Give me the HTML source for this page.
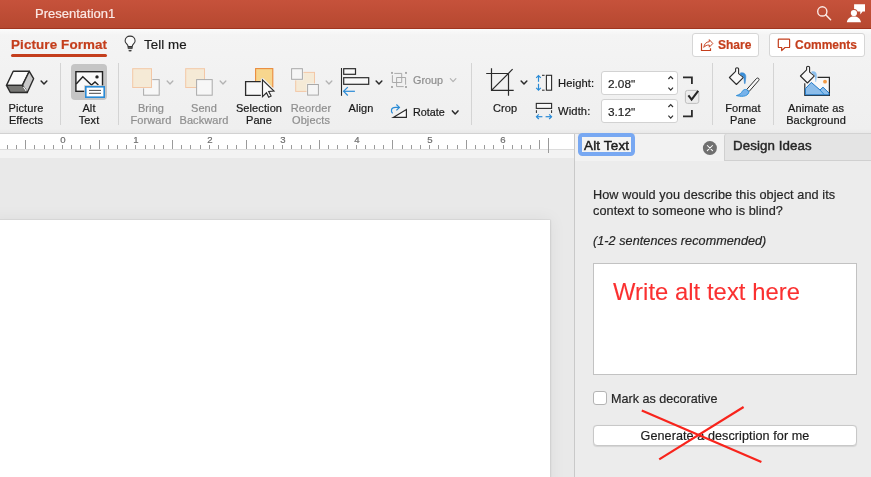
<!DOCTYPE html>
<html><head><meta charset="utf-8">
<style>
html,body{margin:0;padding:0;}
body{width:871px;height:477px;overflow:hidden;position:relative;background:#f1f1f1;font-family:"Liberation Sans", sans-serif;}
.t{position:absolute;white-space:nowrap;line-height:1;will-change:transform;-webkit-text-stroke:0.2px currentColor;}
.a{position:absolute;box-sizing:border-box;}
svg.ov{position:absolute;left:0;top:0;}
</style></head><body>
<div class="a" style="left:0;top:0;width:871px;height:29px;background:linear-gradient(#c6523b,#b64830);border-bottom:1px solid #a0351f;"></div>
<div class="a" style="left:0;top:29px;width:871px;height:104px;background:linear-gradient(#fbfbfb 0px,#f4f4f4 6px,#f1f1f1 60px,#efefef 100px,#e9e9e9 104px);"></div>
<div class="a" style="left:11px;top:54px;width:96px;height:3px;border-radius:2px;background:#c43e1c;"></div>
<div class="a" style="left:692px;top:33px;width:67px;height:24px;border-radius:3px;background:#fff;border:1px solid #d6d6d6;"></div>
<div class="a" style="left:769px;top:33px;width:96px;height:24px;border-radius:3px;background:#fff;border:1px solid #d6d6d6;"></div>
<div class="a" style="left:71px;top:64px;width:36px;height:36px;border-radius:4px;background:#c5c5c5;"></div>
<div class="a" style="left:601px;top:71px;width:77px;height:24px;border-radius:3px;background:#fff;border:1px solid #d2d2d2;"></div>
<div class="a" style="left:601px;top:99px;width:77px;height:24px;border-radius:3px;background:#fff;border:1px solid #d2d2d2;"></div>
<!-- separators -->
<div class="a" style="left:60px;top:63px;width:1px;height:62px;background:#d4d4d4;"></div>
<div class="a" style="left:118px;top:63px;width:1px;height:62px;background:#d4d4d4;"></div>
<div class="a" style="left:471px;top:63px;width:1px;height:62px;background:#d4d4d4;"></div>
<div class="a" style="left:712px;top:63px;width:1px;height:62px;background:#d4d4d4;"></div>
<div class="a" style="left:773px;top:63px;width:1px;height:62px;background:#d4d4d4;"></div>
<!-- ribbon bottom -->
<div class="a" style="left:0;top:133px;width:871px;height:1px;background:#d2d2d2;"></div>
<!-- ruler -->
<div class="a" style="left:0;top:134px;width:574px;height:16px;background:#fff;border-bottom:1px solid #dcdcdc;"></div>
<div class="a" style="left:0;top:150px;width:574px;height:8px;background:#f3f3f3;"></div>
<div class="a" style="left:0;top:158px;width:574px;height:319px;background:#e9e9e9;"></div>
<div class="a" style="left:-10px;top:220px;width:560px;height:270px;background:#fff;box-shadow:0 0 0 0.6px rgba(0,0,0,0.06),0 0 2px 0.5px rgba(0,0,0,0.05),0 0 16px 1px rgba(0,0,0,0.06);"></div>
<!-- panel -->
<div class="a" style="left:574px;top:134px;width:1px;height:343px;background:#c9c9c9;"></div>
<div class="a" style="left:575px;top:134px;width:296px;height:343px;background:#ececec;"></div>
<div class="a" style="left:575px;top:134px;width:149px;height:27px;background:#f2f2f2;"></div>
<div class="a" style="left:724px;top:134px;width:147px;height:27px;background:#e4e4e4;border-left:1px solid #d0d0d0;border-bottom:1px solid #d0d0d0;border-top-left-radius:3px;"></div>
<div class="a" style="left:578.2px;top:133.3px;width:56.6px;height:22.4px;border-radius:4.5px;background:#78a8f2;"></div>
<div class="a" style="left:582.2px;top:137px;width:48.6px;height:15px;background:#f4f4f4;"></div>
<div class="a" style="left:593px;top:263px;width:264px;height:112px;background:#fff;border:1px solid #c2c2c2;"></div>
<div class="a" style="left:593px;top:391px;width:14px;height:14px;border-radius:3px;background:#fff;border:1px solid #b4b4b4;"></div>
<div class="a" style="left:593px;top:425px;width:264px;height:21px;border-radius:4px;background:#fff;border:1px solid #c8c8c8;box-shadow:0 0.5px 1px rgba(0,0,0,0.1);"></div>
<span class="t" style="left:34.5px;top:7.00px;font-size:13px;color:#fbe9e5;">Presentation1</span><span class="t" style="left:11.2px;top:37.96px;font-size:13.4px;color:#c43e1c;font-weight:700;letter-spacing:0.12px;">Picture Format</span><span class="t" style="left:143.9px;top:37.94px;font-size:13.3px;color:#1c1c1c;letter-spacing:0.08px;">Tell me</span><span class="t" style="left:718.2px;top:39.14px;font-size:12px;color:#c43e1c;font-weight:700;">Share</span><span class="t" style="left:795.4px;top:39.14px;font-size:12px;color:#c43e1c;font-weight:700;">Comments</span><span class="t" style="left:26px;top:102.69px;font-size:11px;color:#181818;letter-spacing:0.1px;transform:translateX(-50%);">Picture</span><span class="t" style="left:26px;top:114.69px;font-size:11px;color:#181818;letter-spacing:0.1px;transform:translateX(-50%);">Effects</span><span class="t" style="left:88.8px;top:102.69px;font-size:11px;color:#181818;letter-spacing:0.1px;transform:translateX(-50%);">Alt</span><span class="t" style="left:88.8px;top:114.69px;font-size:11px;color:#181818;letter-spacing:0.1px;transform:translateX(-50%);">Text</span><span class="t" style="left:151.4px;top:102.69px;font-size:11px;color:#8e8e8e;letter-spacing:0.1px;transform:translateX(-50%);">Bring</span><span class="t" style="left:151.4px;top:114.69px;font-size:11px;color:#8e8e8e;letter-spacing:0.1px;transform:translateX(-50%);">Forward</span><span class="t" style="left:204.3px;top:102.69px;font-size:11px;color:#8e8e8e;letter-spacing:0.1px;transform:translateX(-50%);">Send</span><span class="t" style="left:204.3px;top:114.69px;font-size:11px;color:#8e8e8e;letter-spacing:0.1px;transform:translateX(-50%);">Backward</span><span class="t" style="left:259.3px;top:102.69px;font-size:11px;color:#181818;letter-spacing:0.1px;transform:translateX(-50%);">Selection</span><span class="t" style="left:259.3px;top:114.69px;font-size:11px;color:#181818;letter-spacing:0.1px;transform:translateX(-50%);">Pane</span><span class="t" style="left:310.9px;top:102.69px;font-size:11px;color:#8e8e8e;letter-spacing:0.1px;transform:translateX(-50%);">Reorder</span><span class="t" style="left:310.9px;top:114.69px;font-size:11px;color:#8e8e8e;letter-spacing:0.1px;transform:translateX(-50%);">Objects</span><span class="t" style="left:360.7px;top:102.69px;font-size:11px;color:#181818;letter-spacing:0.1px;transform:translateX(-50%);">Align</span><span class="t" style="left:505.4px;top:102.69px;font-size:11px;color:#181818;letter-spacing:0.1px;transform:translateX(-50%);">Crop</span><span class="t" style="left:743px;top:102.69px;font-size:11px;color:#181818;letter-spacing:0.1px;transform:translateX(-50%);">Format</span><span class="t" style="left:743px;top:114.69px;font-size:11px;color:#181818;letter-spacing:0.1px;transform:translateX(-50%);">Pane</span><span class="t" style="left:816px;top:102.69px;font-size:11px;color:#181818;letter-spacing:0.1px;transform:translateX(-50%);">Animate as</span><span class="t" style="left:816px;top:114.69px;font-size:11px;color:#181818;letter-spacing:0.1px;transform:translateX(-50%);">Background</span><span class="t" style="left:413.4px;top:75.06px;font-size:10.8px;color:#8e8e8e;">Group</span><span class="t" style="left:413.4px;top:106.66px;font-size:10.8px;color:#181818;">Rotate</span><span class="t" style="left:558.2px;top:77.72px;font-size:11.2px;color:#181818;letter-spacing:0.12px;">Height:</span><span class="t" style="left:558.2px;top:105.72px;font-size:11.2px;color:#181818;letter-spacing:0.12px;">Width:</span><span class="t" style="left:608.2px;top:78.71px;font-size:11.8px;color:#1f1f1f;">2.08"</span><span class="t" style="left:608.2px;top:106.81px;font-size:11.8px;color:#1f1f1f;">3.12"</span><span class="t" style="left:62.9px;top:134.87px;font-size:9.6px;color:#6e6e6e;transform:translateX(-50%);">0</span><span class="t" style="left:136.33px;top:134.87px;font-size:9.6px;color:#6e6e6e;transform:translateX(-50%);">1</span><span class="t" style="left:209.76000000000002px;top:134.87px;font-size:9.6px;color:#6e6e6e;transform:translateX(-50%);">2</span><span class="t" style="left:283.19px;top:134.87px;font-size:9.6px;color:#6e6e6e;transform:translateX(-50%);">3</span><span class="t" style="left:356.62px;top:134.87px;font-size:9.6px;color:#6e6e6e;transform:translateX(-50%);">4</span><span class="t" style="left:430.05px;top:134.87px;font-size:9.6px;color:#6e6e6e;transform:translateX(-50%);">5</span><span class="t" style="left:503.48px;top:134.87px;font-size:9.6px;color:#6e6e6e;transform:translateX(-50%);">6</span><span class="t" style="left:583.6px;top:138.57px;font-size:13.5px;color:#1c1c1c;letter-spacing:0.15px;-webkit-text-stroke:0.45px #1c1c1c;">Alt Text</span><span class="t" style="left:733.4px;top:139.14px;font-size:13.3px;color:#262626;letter-spacing:0.1px;-webkit-text-stroke:0.45px #262626;">Design Ideas</span><span class="t" style="left:593.2px;top:189.25px;font-size:12.7px;color:#262626;letter-spacing:0.075px;">How would you describe this object and its</span><span class="t" style="left:593.2px;top:205.25px;font-size:12.7px;color:#262626;letter-spacing:0.075px;">context to someone who is blind?</span><span class="t" style="left:593.2px;top:234.63px;font-size:12.6px;color:#262626;font-style:italic;letter-spacing:0.07px;">(1-2 sentences recommended)</span><span class="t" style="left:613.2px;top:280.15px;font-size:23.8px;color:#fa3030;letter-spacing:0.05px;-webkit-text-stroke:0.1px #fa3030;">Write alt text here</span><span class="t" style="left:611.2px;top:392.53px;font-size:12.6px;color:#262626;">Mark as decorative</span><span class="t" style="left:725px;top:429.73px;font-size:12.6px;color:#1c1c1c;letter-spacing:0.08px;transform:translateX(-50%);">Generate a description for me</span>
<svg class="ov" width="871" height="477" viewBox="0 0 871 477">
<line x1="7.5" y1="145" x2="7.5" y2="149" stroke="#9a9a9a" stroke-width="1"/>
<line x1="16.5" y1="145" x2="16.5" y2="149" stroke="#9a9a9a" stroke-width="1"/>
<line x1="25.5" y1="140" x2="25.5" y2="149" stroke="#9a9a9a" stroke-width="1"/>
<line x1="34.5" y1="145" x2="34.5" y2="149" stroke="#9a9a9a" stroke-width="1"/>
<line x1="44.5" y1="145" x2="44.5" y2="149" stroke="#9a9a9a" stroke-width="1"/>
<line x1="53.5" y1="145" x2="53.5" y2="149" stroke="#9a9a9a" stroke-width="1"/>
<line x1="62.5" y1="145" x2="62.5" y2="149" stroke="#9a9a9a" stroke-width="1"/>
<line x1="71.5" y1="145" x2="71.5" y2="149" stroke="#9a9a9a" stroke-width="1"/>
<line x1="80.5" y1="145" x2="80.5" y2="149" stroke="#9a9a9a" stroke-width="1"/>
<line x1="90.5" y1="145" x2="90.5" y2="149" stroke="#9a9a9a" stroke-width="1"/>
<line x1="99.5" y1="140" x2="99.5" y2="149" stroke="#9a9a9a" stroke-width="1"/>
<line x1="108.5" y1="145" x2="108.5" y2="149" stroke="#9a9a9a" stroke-width="1"/>
<line x1="117.5" y1="145" x2="117.5" y2="149" stroke="#9a9a9a" stroke-width="1"/>
<line x1="126.5" y1="145" x2="126.5" y2="149" stroke="#9a9a9a" stroke-width="1"/>
<line x1="135.5" y1="145" x2="135.5" y2="149" stroke="#9a9a9a" stroke-width="1"/>
<line x1="145.5" y1="145" x2="145.5" y2="149" stroke="#9a9a9a" stroke-width="1"/>
<line x1="154.5" y1="145" x2="154.5" y2="149" stroke="#9a9a9a" stroke-width="1"/>
<line x1="163.5" y1="145" x2="163.5" y2="149" stroke="#9a9a9a" stroke-width="1"/>
<line x1="172.5" y1="140" x2="172.5" y2="149" stroke="#9a9a9a" stroke-width="1"/>
<line x1="181.5" y1="145" x2="181.5" y2="149" stroke="#9a9a9a" stroke-width="1"/>
<line x1="190.5" y1="145" x2="190.5" y2="149" stroke="#9a9a9a" stroke-width="1"/>
<line x1="200.5" y1="145" x2="200.5" y2="149" stroke="#9a9a9a" stroke-width="1"/>
<line x1="209.5" y1="145" x2="209.5" y2="149" stroke="#9a9a9a" stroke-width="1"/>
<line x1="218.5" y1="145" x2="218.5" y2="149" stroke="#9a9a9a" stroke-width="1"/>
<line x1="227.5" y1="145" x2="227.5" y2="149" stroke="#9a9a9a" stroke-width="1"/>
<line x1="236.5" y1="145" x2="236.5" y2="149" stroke="#9a9a9a" stroke-width="1"/>
<line x1="246.5" y1="140" x2="246.5" y2="149" stroke="#9a9a9a" stroke-width="1"/>
<line x1="255.5" y1="145" x2="255.5" y2="149" stroke="#9a9a9a" stroke-width="1"/>
<line x1="264.5" y1="145" x2="264.5" y2="149" stroke="#9a9a9a" stroke-width="1"/>
<line x1="273.5" y1="145" x2="273.5" y2="149" stroke="#9a9a9a" stroke-width="1"/>
<line x1="282.5" y1="145" x2="282.5" y2="149" stroke="#9a9a9a" stroke-width="1"/>
<line x1="291.5" y1="145" x2="291.5" y2="149" stroke="#9a9a9a" stroke-width="1"/>
<line x1="301.5" y1="145" x2="301.5" y2="149" stroke="#9a9a9a" stroke-width="1"/>
<line x1="310.5" y1="145" x2="310.5" y2="149" stroke="#9a9a9a" stroke-width="1"/>
<line x1="319.5" y1="140" x2="319.5" y2="149" stroke="#9a9a9a" stroke-width="1"/>
<line x1="328.5" y1="145" x2="328.5" y2="149" stroke="#9a9a9a" stroke-width="1"/>
<line x1="337.5" y1="145" x2="337.5" y2="149" stroke="#9a9a9a" stroke-width="1"/>
<line x1="347.5" y1="145" x2="347.5" y2="149" stroke="#9a9a9a" stroke-width="1"/>
<line x1="356.5" y1="145" x2="356.5" y2="149" stroke="#9a9a9a" stroke-width="1"/>
<line x1="365.5" y1="145" x2="365.5" y2="149" stroke="#9a9a9a" stroke-width="1"/>
<line x1="374.5" y1="145" x2="374.5" y2="149" stroke="#9a9a9a" stroke-width="1"/>
<line x1="383.5" y1="145" x2="383.5" y2="149" stroke="#9a9a9a" stroke-width="1"/>
<line x1="392.5" y1="140" x2="392.5" y2="149" stroke="#9a9a9a" stroke-width="1"/>
<line x1="402.5" y1="145" x2="402.5" y2="149" stroke="#9a9a9a" stroke-width="1"/>
<line x1="411.5" y1="145" x2="411.5" y2="149" stroke="#9a9a9a" stroke-width="1"/>
<line x1="420.5" y1="145" x2="420.5" y2="149" stroke="#9a9a9a" stroke-width="1"/>
<line x1="429.5" y1="145" x2="429.5" y2="149" stroke="#9a9a9a" stroke-width="1"/>
<line x1="438.5" y1="145" x2="438.5" y2="149" stroke="#9a9a9a" stroke-width="1"/>
<line x1="447.5" y1="145" x2="447.5" y2="149" stroke="#9a9a9a" stroke-width="1"/>
<line x1="457.5" y1="145" x2="457.5" y2="149" stroke="#9a9a9a" stroke-width="1"/>
<line x1="466.5" y1="140" x2="466.5" y2="149" stroke="#9a9a9a" stroke-width="1"/>
<line x1="475.5" y1="145" x2="475.5" y2="149" stroke="#9a9a9a" stroke-width="1"/>
<line x1="484.5" y1="145" x2="484.5" y2="149" stroke="#9a9a9a" stroke-width="1"/>
<line x1="493.5" y1="145" x2="493.5" y2="149" stroke="#9a9a9a" stroke-width="1"/>
<line x1="503.5" y1="145" x2="503.5" y2="149" stroke="#9a9a9a" stroke-width="1"/>
<line x1="512.5" y1="145" x2="512.5" y2="149" stroke="#9a9a9a" stroke-width="1"/>
<line x1="521.5" y1="145" x2="521.5" y2="149" stroke="#9a9a9a" stroke-width="1"/>
<line x1="530.5" y1="145" x2="530.5" y2="149" stroke="#9a9a9a" stroke-width="1"/>
<line x1="539.5" y1="140" x2="539.5" y2="149" stroke="#9a9a9a" stroke-width="1"/>
<line x1="548.5" y1="138" x2="548.5" y2="153" stroke="#9a9a9a" stroke-width="1"/>
<circle cx="822.3" cy="11.4" r="4.6" fill="none" stroke="#fbeae6" stroke-width="1.4"/>
<line x1="825.7" y1="14.8" x2="830.6" y2="19.7" stroke="#fbeae6" stroke-width="1.5" stroke-linecap="round"/>
<path d="M854.1,4.2 H865 V11.6 H862.6 L860.3,14.4 V11.6 H854.1 Z" fill="#fff"/>
<circle cx="853.9" cy="13" r="3.9" fill="#bf4c35"/>
<circle cx="853.9" cy="13" r="3.1" fill="#fff"/>
<path d="M846.8,22.2 C847.5,18.3 850.3,16.4 853.9,16.4 C857.5,16.4 860.3,18.3 861,22.2 Z" fill="#fff"/>
<path d="M128.1,46.4 C128.1,44.4 125.1,43.3 125.1,40.9 C125.1,38.1 127.3,36.1 130.1,36.1 C132.9,36.1 135.1,38.1 135.1,40.9 C135.1,43.3 132.2,44.4 132.2,46.4 Z" fill="#fafafa" stroke="#333" stroke-width="1.05" stroke-linejoin="round"/>
<path d="M128.1,46.4 V48.6 H132.2 V46.4 M128.1,47.6 H132.2" fill="none" stroke="#333" stroke-width="0.9"/>
<ellipse cx="130.1" cy="50.7" rx="1.7" ry="0.7" fill="#333"/>
<path d="M701.5,43.2 V50.5 H710.5 V48.2" fill="none" stroke="#c43e1c" stroke-width="1.2" stroke-linejoin="miter"/>
<path d="M703.8,47.4 C704.2,43.8 706.2,42 709.3,41.7 L709.3,39.6 L712.8,43.5 L709.3,47.2 L709.3,45 C706.8,45 705,45.8 703.8,47.4 Z" fill="none" stroke="#c43e1c" stroke-width="0.95" stroke-linejoin="round"/>
<path d="M778.9,39.1 H789 Q789.6,39.1 789.6,39.7 V46.9 Q789.6,47.5 789,47.5 H785 L781.7,50.6 V47.5 H778.9 Q778.3,47.5 778.3,46.9 V39.7 Q778.3,39.1 778.9,39.1 Z" fill="none" stroke="#c43e1c" stroke-width="1.2" stroke-linejoin="round"/>
<polygon points="13.2,71.3 29.3,71.3 22.4,85.4 6.5,85.4" fill="#fafafa" stroke="#2b2b2b" stroke-width="1.4" stroke-linejoin="round"/>
<polygon points="29.3,71.3 33.6,78.7 27.3,92.5 22.4,85.4" fill="#c9c9c9" stroke="#2b2b2b" stroke-width="1.4" stroke-linejoin="round"/>
<polygon points="6.5,85.4 22.4,85.4 27.3,92.5 10.3,92.5" fill="#777774" stroke="#2b2b2b" stroke-width="1.4" stroke-linejoin="round"/>
<line x1="23.4" y1="86.9" x2="26.4" y2="91.3" stroke="#fff" stroke-width="1.1"/>
<polyline points="41.15,81.0 44,84.0 46.85,81.0" fill="none" stroke="#2b2b2b" stroke-width="1.5" stroke-linecap="round" stroke-linejoin="round"/>
<rect x="75.9" y="71.7" width="26.6" height="19.6" fill="#fafafa" stroke="#222" stroke-width="1.4"/>
<polyline points="76.2,84 82.8,76.8 91.5,85 95,82 98.4,85" fill="none" stroke="#222" stroke-width="1.4" stroke-linejoin="miter"/>
<circle cx="97" cy="76.9" r="1.7" fill="#222"/>
<rect x="84.2" y="85.3" width="21.4" height="13.2" fill="#c5c5c5"/>
<rect x="85.8" y="86.8" width="18.4" height="10.4" fill="#fff" stroke="#2a8bd6" stroke-width="1.6"/>
<line x1="89" y1="90.4" x2="101" y2="90.4" stroke="#333" stroke-width="0.9"/>
<line x1="89" y1="93.3" x2="101" y2="93.3" stroke="#333" stroke-width="0.9"/>
<rect x="143.6" y="79.6" width="15.6" height="15.6" fill="#f7f7f7" stroke="#a9a9a9" stroke-width="1"/>
<rect x="131.7" y="67.7" width="20.6" height="20.6" fill="#f4f4f4"/>
<rect x="132.7" y="68.7" width="18.8" height="18.8" fill="#f5ead6" stroke="#f3c7a6" stroke-width="1"/>
<polyline points="167.15,81.0 170,84.0 172.85,81.0" fill="none" stroke="#b3b3b3" stroke-width="1.3" stroke-linecap="round" stroke-linejoin="round"/>
<rect x="185.7" y="68.7" width="18.8" height="18.8" fill="#f5ead6" stroke="#f3c7a6" stroke-width="1"/>
<rect x="196.6" y="79.6" width="15.6" height="15.6" fill="#f7f7f7" stroke="#a9a9a9" stroke-width="1"/>
<polyline points="220.15,81.0 223,84.0 225.85,81.0" fill="none" stroke="#b3b3b3" stroke-width="1.3" stroke-linecap="round" stroke-linejoin="round"/>
<rect x="255.6" y="68.6" width="17.2" height="18.6" fill="#f7d68e" stroke="#ea8a3c" stroke-width="1.1"/>
<rect x="245.6" y="81.7" width="16" height="13.6" fill="#f8f8f8"/>
<path d="M261.2,81.7 H245.6 V95.3 H261.2" fill="none" stroke="#2b2b2b" stroke-width="1.3"/>
<path d="M262.5,79.8 L274,91.1 L268.7,91.5 L271.1,96 L268.7,97.3 L266.5,92.8 L262.5,96.6 Z" fill="#f8f8f8" stroke="#f3f3f3" stroke-width="3.4" stroke-linejoin="round"/>
<path d="M262.5,79.8 L274,91.1 L268.7,91.5 L271.1,96 L268.7,97.3 L266.5,92.8 L262.5,96.6 Z" fill="#fafafa" stroke="#2b2b2b" stroke-width="1.15" stroke-linejoin="miter"/>
<rect x="295.7" y="72.4" width="18.8" height="19" fill="#f5ead6" stroke="#f3c7a6" stroke-width="1"/>
<rect x="290.6" y="67.7" width="12.8" height="12.6" fill="#f4f4f4"/>
<rect x="291.6" y="68.7" width="10.8" height="10.6" fill="#f5f5f5" stroke="#a9a9a9" stroke-width="1"/>
<rect x="306.6" y="83.5" width="12.8" height="12.6" fill="#f4f4f4"/>
<rect x="307.6" y="84.5" width="10.8" height="10.6" fill="#f5f5f5" stroke="#a9a9a9" stroke-width="1"/>
<polyline points="326.15,81.0 329,84.0 331.85,81.0" fill="none" stroke="#b3b3b3" stroke-width="1.3" stroke-linecap="round" stroke-linejoin="round"/>
<line x1="341.5" y1="68" x2="341.5" y2="95.8" stroke="#2b2b2b" stroke-width="1.1"/>
<rect x="343.7" y="68.7" width="11.8" height="5.6" fill="#f8f8f8" stroke="#2b2b2b" stroke-width="1.2"/>
<rect x="343.7" y="77.7" width="25" height="6.6" fill="#f8f8f8" stroke="#2b2b2b" stroke-width="1.2"/>
<line x1="343.6" y1="91.3" x2="354.9" y2="91.3" stroke="#2a8bd6" stroke-width="1.2"/>
<polyline points="347.8,87.1 343.6,91.3 347.8,95.5" fill="none" stroke="#2a8bd6" stroke-width="1.2"/>
<polyline points="376.15,81.0 379,84.0 381.85,81.0" fill="none" stroke="#2b2b2b" stroke-width="1.5" stroke-linecap="round" stroke-linejoin="round"/>
<rect x="391.05" y="71.95" width="1.9" height="1.9" fill="#a6a6a6"/>
<rect x="405.05" y="71.95" width="1.9" height="1.9" fill="#a6a6a6"/>
<rect x="391.05" y="86.05" width="1.9" height="1.9" fill="#a6a6a6"/>
<rect x="405.05" y="86.05" width="1.9" height="1.9" fill="#a6a6a6"/>
<path d="M394.3,73.4 H401.7 V82.5 H392.4 V75.2" fill="none" stroke="#a6a6a6" stroke-width="0.95"/>
<path d="M405.6,84.7 V77.5 H396.6 V86.6 H403.7" fill="none" stroke="#a6a6a6" stroke-width="0.95"/>
<polyline points="450.3,78.6 453.1,81.6 455.90000000000003,78.6" fill="none" stroke="#b3b3b3" stroke-width="1.2" stroke-linecap="round" stroke-linejoin="round"/>
<polygon points="393.2,117.4 406.4,109.6 406.4,117.4" fill="#fafafa" stroke="#2b2b2b" stroke-width="1.15" stroke-linejoin="miter"/>
<path d="M392.6,113.4 C390.8,111.6 390.6,107.4 395.4,107.4 L399.4,107.4" fill="none" stroke="#2a8bd6" stroke-width="1.2"/>
<polyline points="396.4,104.5 399.4,107.4 396.4,110.4" fill="none" stroke="#2a8bd6" stroke-width="1.2"/>
<polyline points="452.4,110.9 455.2,114.0 458.0,110.9" fill="none" stroke="#2b2b2b" stroke-width="1.5" stroke-linecap="round" stroke-linejoin="round"/>
<path d="M491.5,68.2 V90.4 H513.7 M486.2,73.5 H508.5 V95.7 M491.5,90.4 L512.6,69.2" fill="none" stroke="#2b2b2b" stroke-width="1.2"/>
<polyline points="521.15,81.0 524,84.0 526.85,81.0" fill="none" stroke="#2b2b2b" stroke-width="1.5" stroke-linecap="round" stroke-linejoin="round"/>
<line x1="538.5" y1="75.8" x2="538.5" y2="81.8" stroke="#2a8bd6" stroke-width="1.2"/>
<line x1="538.5" y1="83.8" x2="538.5" y2="89.8" stroke="#2a8bd6" stroke-width="1.2"/>
<polyline points="536.2,77.8 538.5,75.5 540.8,77.8" fill="none" stroke="#2a8bd6" stroke-width="1.2"/>
<polyline points="536.2,87.8 538.5,90.1 540.8,87.8" fill="none" stroke="#2a8bd6" stroke-width="1.2"/>
<line x1="542" y1="75.3" x2="544.6" y2="75.3" stroke="#2b2b2b" stroke-width="1"/>
<line x1="542" y1="90.2" x2="544.6" y2="90.2" stroke="#2b2b2b" stroke-width="1"/>
<rect x="546.4" y="75.3" width="5.2" height="14.9" fill="#f8f8f8" stroke="#2b2b2b" stroke-width="1.1"/>
<rect x="536.3" y="103.4" width="15.3" height="5" fill="#f8f8f8" stroke="#2b2b2b" stroke-width="1.1"/>
<line x1="536.4" y1="110.2" x2="536.4" y2="113" stroke="#2b2b2b" stroke-width="1"/>
<line x1="551.6" y1="110.2" x2="551.6" y2="113" stroke="#2b2b2b" stroke-width="1"/>
<line x1="536.6" y1="116.7" x2="542.4" y2="116.7" stroke="#2a8bd6" stroke-width="1.2"/>
<line x1="545.6" y1="116.7" x2="551.4" y2="116.7" stroke="#2a8bd6" stroke-width="1.2"/>
<polyline points="538.8,114.4 536.5,116.7 538.8,119" fill="none" stroke="#2a8bd6" stroke-width="1.2"/>
<polyline points="549.2,114.4 551.5,116.7 549.2,119" fill="none" stroke="#2a8bd6" stroke-width="1.2"/>
<polyline points="668.4,79.0 670.7,76.5 673,79.0" fill="none" stroke="#2e2e2e" stroke-width="1.15"/>
<polyline points="668.4,87.7 670.7,90.2 673,87.7" fill="none" stroke="#2e2e2e" stroke-width="1.15"/>
<polyline points="668.4,107.0 670.7,104.5 673,107.0" fill="none" stroke="#2e2e2e" stroke-width="1.15"/>
<polyline points="668.4,115.7 670.7,118.2 673,115.7" fill="none" stroke="#2e2e2e" stroke-width="1.15"/>
<polyline points="683,77.4 691.9,77.4 691.9,84" fill="none" stroke="#2b2b2b" stroke-width="1.8"/>
<polyline points="683,116.4 691.9,116.4 691.9,110" fill="none" stroke="#2b2b2b" stroke-width="1.8"/>
<rect x="685.4" y="90.4" width="13.4" height="13" rx="2.2" fill="#ececec" stroke="#b9b9b9" stroke-width="0.9"/>
<polyline points="688.4,95.4 691.6,99.6 698.2,90.8" fill="none" stroke="#262626" stroke-width="2.1" stroke-linejoin="miter"/>
<path d="M729.4,77.5 L735.6,71.3 L735.6,68.8 Q735.6,67.8 737,67.8 Q738.6,67.8 738.6,68.8 L738.6,73.6 L743.4,77.4 L736.4,84.5 Z" fill="#f8f8f8" stroke="#2b2b2b" stroke-width="1.1" stroke-linejoin="round"/>
<path d="M740.4,72.9 C743.8,72 746.2,74 745.8,77.4 L745.1,83.6 L744.5,83.6 L743.9,78 C743.6,76.2 742.6,75.2 740.6,75 Z" fill="#3b8fd8" stroke="#2a7fcc" stroke-width="0.5"/>
<path d="M758.6,78.4 Q759.6,79.6 758.6,80.6 L749,91.6 L746.6,89.6 L756.6,78.4 Q757.6,77.6 758.6,78.4 Z" fill="#f8f8f8" stroke="#2b2b2b" stroke-width="1"/>
<path d="M746.6,89.6 L749,91.6 C748.4,95.4 744.4,97.4 736.4,95.6 C740,94.6 741.4,93 742.4,91.2 C743.4,89.6 745,89.2 746.6,89.6 Z" fill="#77b2ea" stroke="#2a8bd6" stroke-width="1"/>
<rect x="804.8" y="77.4" width="24.6" height="18" fill="#f8f8f8"/>
<path d="M817.6,77.4 H829.4 V95.4 H804.8 V83.2" fill="none" stroke="#2b2b2b" stroke-width="1.2"/>
<path d="M805.4,88.7 L811.3,82.4 L820,90 L823,87.2 L829,93 V94.8 H805.4 Z" fill="#8cbdea" stroke="#1f78c8" stroke-width="1"/>
<line x1="820" y1="90" x2="824.4" y2="94.8" stroke="#2a8bd6" stroke-width="1"/>
<circle cx="825" cy="81.7" r="1.9" fill="#f39a44"/>
<path d="M800.4,76 L806.6,69.8 L806.6,67.3 Q806.6,66.3 808,66.3 Q809.6,66.3 809.6,67.3 L809.6,72.1 L814.4,75.9 L807.4,83 Z" fill="#f8f8f8" stroke="#f6f6f6" stroke-width="3" stroke-linejoin="round"/>
<path d="M800.4,76 L806.6,69.8 L806.6,67.3 Q806.6,66.3 808,66.3 Q809.6,66.3 809.6,67.3 L809.6,72.1 L814.4,75.9 L807.4,83 Z" fill="#f8f8f8" stroke="#2b2b2b" stroke-width="1.1" stroke-linejoin="round"/>
<path d="M811.4,71.4 C814.8,70.5 817.2,72.5 816.8,75.9 L816.1,82.1 L815.5,82.1 L814.9,76.5 C814.6,74.7 813.6,73.7 811.6,73.5 Z" fill="#8cc0ee"/>
<circle cx="709.9" cy="148.1" r="7" fill="#707070"/>
<path d="M707.3,145.5 L712.5,150.7 M712.5,145.5 L707.3,150.7" stroke="#fff" stroke-width="1.05" stroke-linecap="round"/>
<line x1="641.8" y1="410.6" x2="761.4" y2="462" stroke="#f8241c" stroke-width="2.2"/>
<line x1="743.6" y1="407" x2="659.2" y2="459.4" stroke="#f8241c" stroke-width="2.2"/>
</svg>
</body></html>
